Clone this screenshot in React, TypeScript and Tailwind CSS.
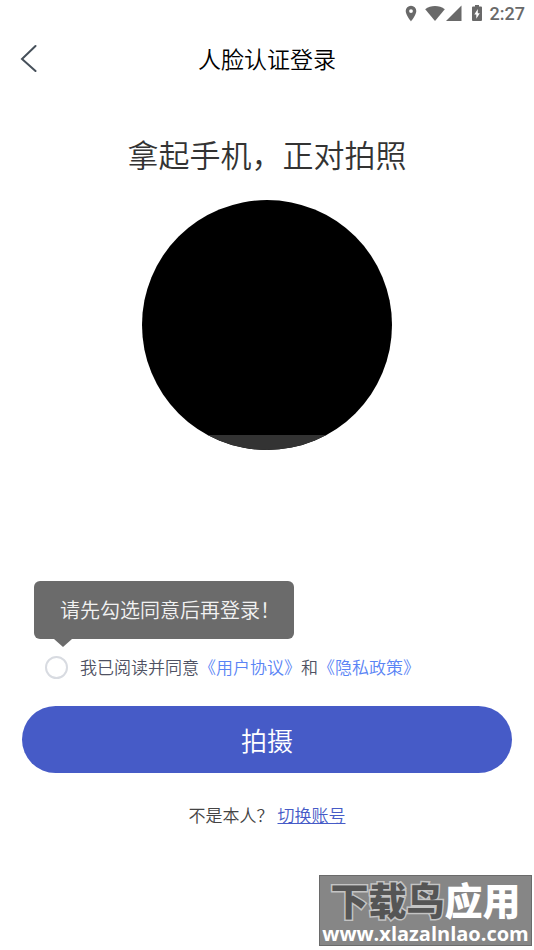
import { useState } from 'react';

function StatusBar() {
  return (
    <div className="flex h-7 items-center justify-end px-[9px] text-[#696969]">
      <svg className="mr-2 h-[18px] w-3" viewBox="0 0 12 18" fill="currentColor" aria-hidden="true">
        <path fillRule="evenodd" d="M6 .8a5.300 5.300 0 0 0-5.300 5.300C.7 10.200 6 16.500 6 16.500s5.300-6.300 5.300-10.400A5.300 5.300 0 0 0 6 .8zm0 3.400a1.900 1.900 0 1 1 0 3.800 1.900 1.900 0 0 1 0-3.800z" />
      </svg>
      <svg className="h-[18px] w-5" viewBox="0 0 20 18" fill="currentColor" aria-hidden="true">
        <path d="M10 16 .2 4.200C5.700-.2 14.300-.2 19.800 4.200z" />
      </svg>
      <svg className="mr-[10px] ml-[1px] h-[18px] w-4" viewBox="0 0 16 18" fill="currentColor" aria-hidden="true">
        <path d="M15.500.5V16H0z" />
      </svg>
      <svg className="mr-2 h-[18px] w-[10px]" viewBox="0 0 10 18" fill="currentColor" aria-hidden="true">
        <path fillRule="evenodd" d="M3 0h4v1.500h2q1 0 1 1V15q0 1-1 1H1q-1 0-1-1V2.500q0-1 1-1h2zm2.800 4L2.300 9.500h2v4.300L7.800 8.200h-2z" />
      </svg>
      <span className="font-[Roboto,sans-serif] text-lg leading-7 font-medium">2:27</span>
    </div>
  );
}

function Watermark() {
  return (
    <div className="absolute right-[2px] bottom-1 flex h-[71px] w-[213px] flex-col items-center border border-[#6a6a6a] bg-[#868686] pt-1 whitespace-nowrap">
      <div className="text-[38px] leading-[38px] font-black [paint-order:stroke_fill]">
        <span className="text-[#555] [-webkit-text-stroke:3px_#c4c4c4]">下载鸟</span>
        <span className="text-white">应用</span>
      </div>
      <div className="mt-1.5 font-['Open_Sans',sans-serif] text-xl leading-5 font-bold text-white">
        www.xlazalnlao.com
      </div>
    </div>
  );
}

export default function App() {
  const [agreed, setAgreed] = useState(false);

  return (
    <div className="relative flex min-h-screen flex-col bg-white font-['Noto_Sans_CJK_SC',sans-serif] font-[350]">
      <StatusBar />

      <header className="grid h-[60px] grid-cols-[1fr_auto_1fr] items-center px-5">
        <button type="button" aria-label="返回" className="justify-self-start text-[#46505a]">
          <svg className="h-7 w-[18px]" viewBox="0 0 18 28" fill="none" stroke="currentColor" strokeWidth="2" strokeLinecap="round" aria-hidden="true">
            <path d="M15.500 2 2 15l13.500 12" />
          </svg>
        </button>
        <h1 className="text-[23px] leading-8 font-[350] text-black">人脸认证登录</h1>
      </header>

      <main className="flex flex-col">
        <h2 className="mt-[42px] text-center text-[31px] leading-12 font-[350] text-[#333]">拿起手机，正对拍照</h2>

        {/* Camera preview */}
        <div className="mt-[22px] flex size-[250px] flex-col justify-end self-center overflow-hidden rounded-full bg-black">
          <div className="h-[15px] bg-[#333]" />
        </div>

        <div className="mt-[131px] ml-[34px] self-start">
          <div role="tooltip" className="rounded-md bg-[#6b6b6b] py-[14px] pr-[14px] pl-[26px] text-xl leading-[30px] text-[#f2f2f2]">
            请先勾选同意后再登录！
          </div>
          <div className="ml-5 h-2 w-[18px] bg-[#6b6b6b] [clip-path:polygon(0_0,100%_0,50%_100%)]" />
        </div>

        <div className="mt-2 flex items-center px-[45px] text-[17px] leading-6 text-[#4f5263]">
          <input
            id="agree"
            type="checkbox"
            checked={agreed}
            onChange={(e) => setAgreed(e.target.checked)}
            className="mr-3 size-[23px] shrink-0 appearance-none rounded-full border-2 border-[#d8dbe1] checked:border-[#465bc7] checked:bg-[#465bc7]"
          />
          <p>
            <label htmlFor="agree">我已阅读并同意</label>
            <a href="#terms" className="text-[#5a84f5]">《用户协议》</a>
            和
            <a href="#privacy" className="text-[#5a84f5]">《隐私政策》</a>
          </p>
        </div>

        <button type="button" className="mx-[22px] mt-[27px] h-[67px] rounded-full bg-[#465bc7] text-[26px] font-[350] text-white">
          拍摄
        </button>

        <p className="mt-[30px] text-center text-[17px] leading-6 text-[#444]">
          不是本人？
          <a href="#switch" className="ml-1 text-[#465bc7] underline">切换账号</a>
        </p>
      </main>

      <Watermark />
    </div>
  );
}
